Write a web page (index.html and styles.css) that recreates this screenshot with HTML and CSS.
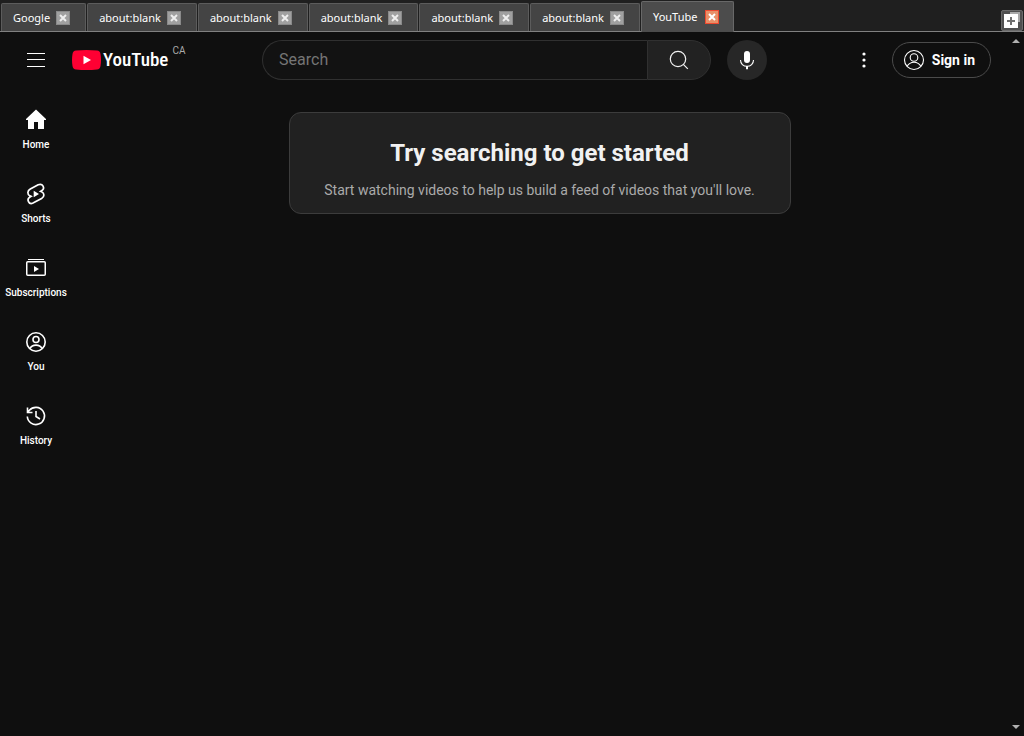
FILE: index.html
```html
<!DOCTYPE html>
<html lang="en">
<head>
<meta charset="utf-8">
<title>YouTube</title>
<link rel="stylesheet" href="styles.css">
</head>
<body>
<nav class="tabs" aria-label="Open tabs">
  <div class="tab"><span>Google</span><button class="close" aria-label="Close Google"><svg viewBox="0 0 12 12"><path d="M3 3l6 6M9 3l-6 6"/></svg></button></div>
  <div class="tab"><span>about:blank</span><button class="close" aria-label="Close tab"><svg viewBox="0 0 12 12"><path d="M3 3l6 6M9 3l-6 6"/></svg></button></div>
  <div class="tab"><span>about:blank</span><button class="close" aria-label="Close tab"><svg viewBox="0 0 12 12"><path d="M3 3l6 6M9 3l-6 6"/></svg></button></div>
  <div class="tab"><span>about:blank</span><button class="close" aria-label="Close tab"><svg viewBox="0 0 12 12"><path d="M3 3l6 6M9 3l-6 6"/></svg></button></div>
  <div class="tab"><span>about:blank</span><button class="close" aria-label="Close tab"><svg viewBox="0 0 12 12"><path d="M3 3l6 6M9 3l-6 6"/></svg></button></div>
  <div class="tab"><span>about:blank</span><button class="close" aria-label="Close tab"><svg viewBox="0 0 12 12"><path d="M3 3l6 6M9 3l-6 6"/></svg></button></div>
  <div class="tab active"><span>YouTube</span><button class="close" aria-label="Close YouTube"><svg viewBox="0 0 12 12"><path d="M3 3l6 6M9 3l-6 6"/></svg></button></div>
  <button class="new-tab" aria-label="New tab"><svg viewBox="0 0 20 19"><path d="M8 1h10v10H8z" fill="#a8a8a8"/><path d="M2 3h14v14H2z" fill="#fff"/><path d="M9 6v8M5 10h8" stroke="#707070" stroke-width="2"/></svg></button>
</nav>
<div class="view">
  <div class="page">
    <header class="masthead">
      <div class="start">
        <button class="icon-btn" aria-label="Guide"><svg viewBox="0 0 24 24"><path d="M3 5.500h18M3 11.500h18M3 18.500h18" stroke="#fff" fill="none"/></svg></button>
        <a class="logo" href="#"><svg viewBox="0 0 29 20"><path d="M4 .500Q14.500-.500 25 .500Q28 .800 28.500 4Q29.500 10 28.500 16Q28 19.200 25 19.500Q14.500 20.500 4 19.500Q1 19.200 .500 16Q-.500 10 .500 4Q1 .800 4 .500z" fill="#f03"/><path d="M11.500 5.700v8.600l7.500-4.300z" fill="#fff"/></svg><span class="word">YouTube</span><span class="country">CA</span></a>
      </div>
      <div class="center">
        <form class="search">
          <input type="text" placeholder="Search" aria-label="Search">
          <button type="button" aria-label="Search"><svg viewBox="0 0 24 24" fill="none" stroke="#f1f1f1" stroke-width="1.200"><circle cx="11" cy="11" r="7.700"/><path d="M16.300 16.300l4.500 4.500"/></svg></button>
        </form>
        <button class="mic" aria-label="Search with your voice"><svg viewBox="0 0 24 24"><rect x="9" y="3" width="6" height="12" rx="3" fill="#fff"/><path d="M5.500 12c0 3.700 2.800 6.300 6.500 6.300s6.500-2.600 6.500-6.300" fill="none" stroke="#fff" stroke-width="1.100"/><path d="M12 18v3.200" stroke="#fff" stroke-width="2"/></svg></button>
      </div>
      <div class="end">
        <button class="icon-btn" aria-label="Settings"><svg viewBox="0 0 24 24" fill="#fff"><circle cx="12" cy="6" r="1.600"/><circle cx="12" cy="12" r="1.600"/><circle cx="12" cy="18" r="1.600"/></svg></button>
        <a class="sign-in" href="#"><svg viewBox="0 0 24 24" fill="none" stroke="#fff" stroke-width="1.100"><circle cx="12" cy="12" r="9.500"/><circle cx="12" cy="9.500" r="3.800"/><path d="M5 18.500c1.800-3.300 4-4.300 7-4.300s5.200 1 7 4.300"/></svg>Sign in</a>
      </div>
    </header>
    <div class="body">
      <nav class="guide" aria-label="Guide">
        <a href="#"><svg viewBox="0 0 24 24"><path d="M12 1.500L22 11v1h-2v8.500q0 .500-.500.500H14v-7h-4v7H4.500q-.500 0-.500-.500V12H2v-1z" fill="#fff"/></svg>Home</a>
        <a href="#"><svg viewBox="0 0 24 24"><path d="M14.200 2.800L6.300 7.100C3.200 8.900 3 12.400 6 13.900l1 .400-1 .600c-3.900 2.300-1.200 8.100 3 6.200l8.600-4.600c3.100-1.800 3-5.300 0-6.700l-1-.400 1-.600c3.900-2.300 1.200-7.900-3.400-6z" fill="none" stroke="#fff" stroke-width="1.700"/><path d="M9.700 8.800v6.400l5.300-3.200z" fill="#fff"/></svg>Shorts</a>
        <a href="#"><svg viewBox="0 0 24 24"><path d="M4 3.500h16" stroke="#fff"/><rect x="2.750" y="5.750" width="18.500" height="13.500" rx="1" fill="none" stroke="#fff" stroke-width="1.500"/><path d="M10 10v6l5-3z" fill="#fff"/></svg>Subscriptions</a>
        <a href="#"><svg viewBox="0 0 24 24" fill="none" stroke="#fff" stroke-width="1.600"><circle cx="12" cy="12" r="9.200"/><circle cx="12" cy="9.500" r="3"/><path d="M5.800 18.500c1.500-2.600 3.500-3.400 6.200-3.400s4.700.800 6.200 3.400"/></svg>You</a>
        <a href="#"><svg viewBox="0 0 24 24" fill="none" stroke="#fff" stroke-width="1.600"><path d="M3.300 12.500a8.600 8.600 0 1 0 2.100-6.200L3.500 8.500M3.500 3.500v5h5M12 7v5.500l4 2.500"/></svg>History</a>
      </nav>
      <main class="content">
        <section class="card">
          <h1>Try searching to get started</h1>
          <p>Start watching videos to help us build a feed of videos that you'll love.</p>
        </section>
      </main>
    </div>
  </div>
  <div class="scrollbar" aria-hidden="true"><svg viewBox="0 0 8 4"><path d="M0 4h8L4 0z"/></svg><svg viewBox="0 0 8 4"><path d="M0 0h8L4 4z"/></svg></div>
</div>
</body>
</html>
```
FILE: styles.css
```css
* { box-sizing: border-box; }
body {
  margin: 0;
  min-height: 100vh;
  display: flex;
  flex-direction: column;
  background: #0f0f0f;
  color: #f1f1f1;
  font-family: Roboto, sans-serif;
}
button { margin: 0; padding: 0; border: 0; background: none; color: inherit; font: inherit; }
a { color: inherit; text-decoration: none; }
svg { display: block; flex: none; }

.tabs {
  display: flex;
  align-items: flex-end;
  height: 32px;
  padding: 0 1px;
  background: #1f1f1f;
  border-bottom: 1px solid #808080;
  font: 11px/16px "Noto Sans", sans-serif;
  color: #fff;
}
.tab {
  display: flex;
  align-items: center;
  justify-content: space-between;
  gap: 6px;
  min-width: 85px;
  height: 28px;
  padding: 0 15px 0 11px;
  margin-right: 1px;
  border: 1px solid #5c5c5c;
  border-bottom: 0;
  border-radius: 2px 2px 0 0;
  background: #444;
}
.tab.active { min-width: 93px; height: 31px; margin-bottom: -1px; padding: 0 14px 0 11px; border-color: #686868; background: #4c4c4c; }
.close { width: 14px; height: 14px; border: 1px solid #8a8a8a; background: #a0a0a0; }
.close svg { width: 12px; height: 12px; stroke: #eee; stroke-width: 2; }
.active .close { border-color: #f04a30; background: #e89068; }
.active .close svg { stroke: #fff; }
.new-tab { width: 22px; height: 21px; margin-left: auto; border: 1px solid #6a6a6a; border-radius: 2px; background: #505050; }
.new-tab svg { width: 20px; height: 19px; }

.view { flex: 1; display: flex; }
.page { flex: 1; min-width: 0; }
.scrollbar {
  width: 17px;
  display: flex;
  flex-direction: column;
  justify-content: space-between;
  align-items: center;
  padding: 7px 0;
}
.scrollbar svg { width: 8px; height: 4px; fill: #b0b0b0; }

.masthead {
  display: flex;
  align-items: center;
  justify-content: space-between;
  height: 56px;
  padding: 0 16px;
}
.start, .center, .end { display: flex; align-items: center; }
.icon-btn { width: 40px; height: 40px; display: grid; place-items: center; }
.icon-btn svg { width: 24px; height: 24px; }
.logo { display: flex; align-items: center; height: 40px; padding-left: 16px; }
.logo svg { width: 29px; height: 20px; }
.word { margin-left: 2px; font: 500 19px/24px "Roboto Condensed", "Liberation Sans Narrow", "Liberation Sans", sans-serif; color: #fff; }
.country { align-self: flex-start; margin-left: 4px; font-size: 10px; line-height: 22px; color: #aaa; }
.center { flex: 0 1 505px; gap: 16px; }
.search { flex: 1; display: flex; height: 40px; }
.search input {
  flex: 1;
  min-width: 0;
  padding: 0 16px;
  border: 1px solid #303030;
  border-right: 0;
  border-radius: 20px 0 0 20px;
  outline: 0;
  background: #121212;
  color: #fff;
  font: 16px/24px Roboto, sans-serif;
}
.search input::placeholder { color: #757575; opacity: 1; }
.search button {
  width: 64px;
  display: grid;
  place-items: center;
  border: 1px solid #303030;
  border-radius: 0 20px 20px 0;
  background: #222;
}
.search svg, .mic svg { width: 24px; height: 24px; }
.mic { width: 40px; height: 40px; display: grid; place-items: center; border-radius: 20px; background: #272727; }
.end { gap: 8px; }
.sign-in {
  display: flex;
  align-items: center;
  gap: 6px;
  height: 36px;
  padding: 0 15px 0 9px;
  border: 1px solid #4b4b4b;
  border-radius: 18px;
  font-size: 14px;
  font-weight: 700;
  color: #fff;
}
.sign-in svg { width: 24px; height: 24px; }

.body { display: flex; }
.guide { width: 72px; padding-top: 4px; flex: none; }
.guide a {
  display: flex;
  flex-direction: column;
  align-items: center;
  gap: 6px;
  height: 74px;
  padding-top: 16px;
  font-size: 10px;
  line-height: 14px;
  font-weight: 500;
  color: #fff;
}
.guide svg { width: 24px; height: 24px; }
.content { flex: 1; padding: 24px; }
.card {
  max-width: 502px;
  margin: 0 auto;
  padding: 24px 16px 14px;
  border: 1px solid #3c3c3c;
  border-radius: 12px;
  background: #212121;
  text-align: center;
}
.card h1 { margin: 0 0 12px; font-size: 24px; line-height: 32px; font-weight: 700; }
.card p { margin: 0; font-size: 14px; line-height: 18px; color: #aaa; }
```
